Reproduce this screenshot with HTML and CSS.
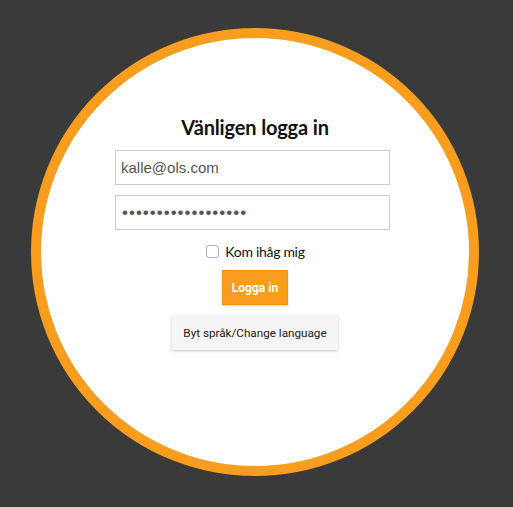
FILE: index.html
```html
<!DOCTYPE html>
<html lang="sv">
<head>
<meta charset="utf-8">
<title>Logga in</title>
<link rel="stylesheet" href="styles.css">
</head>
<body>
<div class="circle">
  <h1 class="title">Vänligen logga in</h1>
  <input class="field" type="text" value="kalle@ols.com">
  <input class="field field-pw" type="password" value="abcdefghijklmnopqr">
  <label class="remember"><input class="check" type="checkbox"><span>Kom ihåg mig</span></label>
  <button class="btn-login">Logga in</button>
  <button class="btn-lang">Byt språk/Change language</button>
</div>
</body>
</html>
```
FILE: styles.css
```css
html, body {
  margin: 0;
  padding: 0;
  background: #3a3a3a;
}
body {
  width: 513px;
  height: 507px;
  overflow: hidden;
}
.circle {
  width: 448px;
  height: 448px;
  margin: 28px 0 0 31px;
  box-sizing: border-box;
  border: 10px solid #f89d1e;
  border-radius: 50%;
  background: #fff;
  display: flex;
  flex-direction: column;
  align-items: center;
  padding-top: 75px;
}
.title {
  margin: 0 0 9px;
  font-family: Lato, "Noto Sans", sans-serif;
  font-weight: 700;
  font-size: 20px;
  letter-spacing: -0.15px;
  line-height: 28px;
  color: #111;
}
.field {
  width: 275px;
  height: 35px;
  box-sizing: border-box;
  border: 1px solid #cccccc;
  padding: 0 5px;
  margin: 0 5px 10px 0;
  font-family: "Liberation Sans", Arial, sans-serif;
  font-size: 15px;
  color: #555;
  background: #fff;
  outline: none;
}
.field-pw {
  margin-bottom: 11px;
  font-size: 17px;
  letter-spacing: 1px;
  padding-left: 6px;
}
.remember {
  display: flex;
  align-items: center;
  height: 20px;
  font-family: Lato, "Noto Sans", sans-serif;
  font-size: 14px;
  letter-spacing: -0.3px;
  color: #111;
}
.check {
  appearance: none;
  -webkit-appearance: none;
  width: 13px;
  height: 13px;
  margin: 0 6px 0 1px;
  box-sizing: border-box;
  border: 1px solid #b0b0b0;
  border-radius: 3px;
  background: #fff;
}
.btn-login {
  margin-top: 9px;
  width: 66px;
  height: 35px;
  border: 1px solid #ef9514;
  background: #f89d1e;
  color: #fff;
  font-family: Roboto, "Liberation Sans", sans-serif;
  font-weight: bold;
  font-size: 12px;
  box-shadow: 0 1px 2px rgba(0,0,0,0.2);
  padding: 0;
}
.btn-lang {
  margin-top: 10px;
  width: 166px;
  height: 35px;
  border: none;
  background: #f5f5f5;
  color: #222;
  font-family: Roboto, "Liberation Sans", sans-serif;
  font-size: 11.7px;
  box-shadow: 0 1px 3px rgba(0,0,0,0.22);
  padding: 0;
}
```
